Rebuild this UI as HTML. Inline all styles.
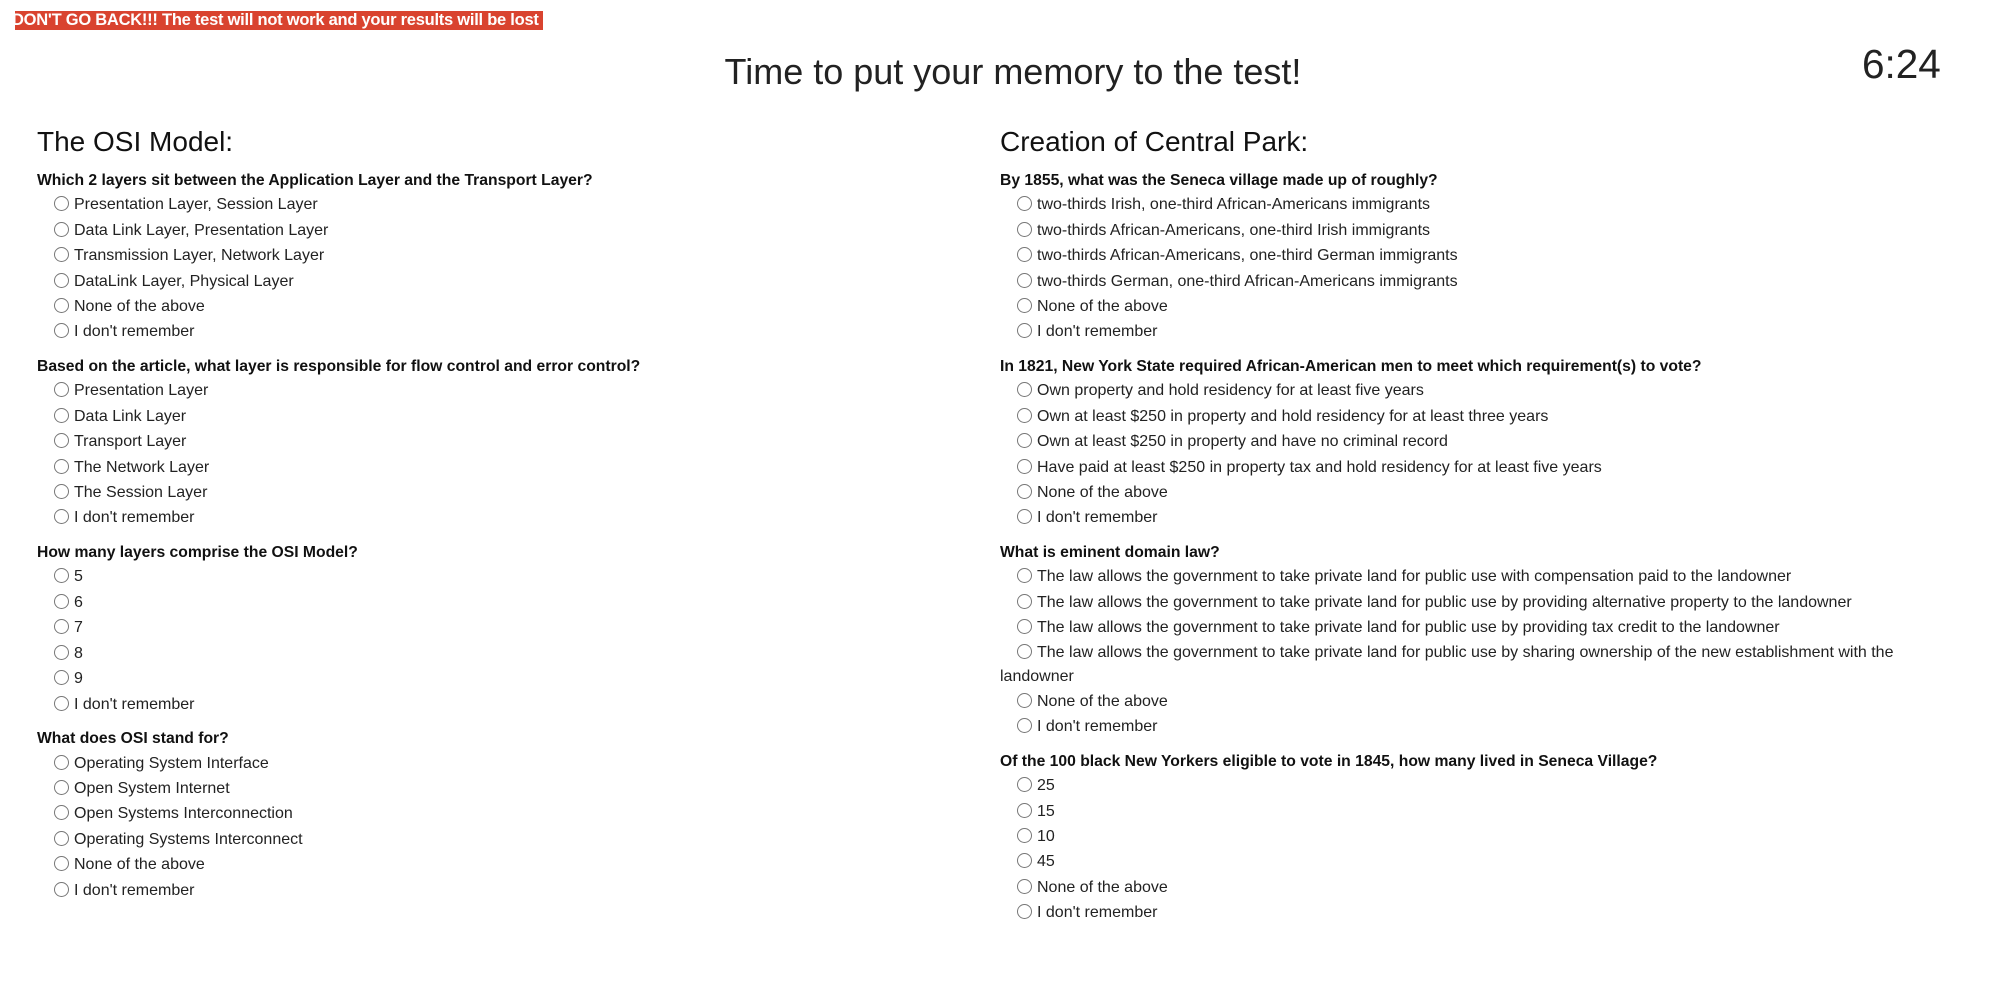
<!DOCTYPE html>
<html><head><meta charset="utf-8"><style>
body{margin:0;width:2002px;height:988px;background:#fff;font-family:"Liberation Sans",Arial,sans-serif;color:#111;position:relative;overflow:hidden}
.banner{position:absolute;left:15px;top:11px;width:528px;height:19px;background:#d9432f;color:#fff;font-weight:bold;font-size:16.5px;line-height:19px;white-space:nowrap;overflow:hidden;letter-spacing:-0.25px;text-indent:-3px}
.title{position:absolute;left:0;width:2026px;top:50px;text-align:center;font-size:36px;line-height:44px;color:#222}
.timer{position:absolute;left:1862px;top:42px;font-size:40.5px;line-height:44px;color:#222}
.col{position:absolute;top:124px}
h2{margin:0;font-weight:normal;font-size:28px;line-height:36px;color:#111}
.q{font-weight:bold;font-size:15.7px;line-height:23.4px;margin-top:10.2px}
.q.first{margin-top:9px}
.o{font-size:16px;line-height:25.4px;padding-left:17px;color:#222}
.o.wrap{line-height:24px}
.r{display:inline-block;width:13px;height:13px;border:1px solid #777;border-radius:50%;vertical-align:-2px;margin-right:5px;background:#fff}
</style></head><body>
<div class="banner">DON'T GO BACK!!! The test will not work and your results will be lost</div>
<div class="title">Time to put your memory to the test!</div>
<div class="timer">6:24</div>

<div class="col" style="left:37px;width:900px">
<h2>The OSI Model:</h2>
<div class="q first">Which 2 layers sit between the Application Layer and the Transport Layer?</div>
<div class="o"><span class="r"></span>Presentation Layer, Session Layer</div>
<div class="o"><span class="r"></span>Data Link Layer, Presentation Layer</div>
<div class="o"><span class="r"></span>Transmission Layer, Network Layer</div>
<div class="o"><span class="r"></span>DataLink Layer, Physical Layer</div>
<div class="o"><span class="r"></span>None of the above</div>
<div class="o"><span class="r"></span>I don't remember</div>
<div class="q">Based on the article, what layer is responsible for flow control and error control?</div>
<div class="o"><span class="r"></span>Presentation Layer</div>
<div class="o"><span class="r"></span>Data Link Layer</div>
<div class="o"><span class="r"></span>Transport Layer</div>
<div class="o"><span class="r"></span>The Network Layer</div>
<div class="o"><span class="r"></span>The Session Layer</div>
<div class="o"><span class="r"></span>I don't remember</div>
<div class="q">How many layers comprise the OSI Model?</div>
<div class="o"><span class="r"></span>5</div>
<div class="o"><span class="r"></span>6</div>
<div class="o"><span class="r"></span>7</div>
<div class="o"><span class="r"></span>8</div>
<div class="o"><span class="r"></span>9</div>
<div class="o"><span class="r"></span>I don't remember</div>
<div class="q">What does OSI stand for?</div>
<div class="o"><span class="r"></span>Operating System Interface</div>
<div class="o"><span class="r"></span>Open System Internet</div>
<div class="o"><span class="r"></span>Open Systems Interconnection</div>
<div class="o"><span class="r"></span>Operating Systems Interconnect</div>
<div class="o"><span class="r"></span>None of the above</div>
<div class="o"><span class="r"></span>I don't remember</div>
</div>

<div class="col" style="left:1000px;width:945px">
<h2>Creation of Central Park:</h2>
<div class="q first">By 1855, what was the Seneca village made up of roughly?</div>
<div class="o"><span class="r"></span>two-thirds Irish, one-third African-Americans immigrants</div>
<div class="o"><span class="r"></span>two-thirds African-Americans, one-third Irish immigrants</div>
<div class="o"><span class="r"></span>two-thirds African-Americans, one-third German immigrants</div>
<div class="o"><span class="r"></span>two-thirds German, one-third African-Americans immigrants</div>
<div class="o"><span class="r"></span>None of the above</div>
<div class="o"><span class="r"></span>I don't remember</div>
<div class="q">In 1821, New York State required African-American men to meet which requirement(s) to vote?</div>
<div class="o"><span class="r"></span>Own property and hold residency for at least five years</div>
<div class="o"><span class="r"></span>Own at least $250 in property and hold residency for at least three years</div>
<div class="o"><span class="r"></span>Own at least $250 in property and have no criminal record</div>
<div class="o"><span class="r"></span>Have paid at least $250 in property tax and hold residency for at least five years</div>
<div class="o"><span class="r"></span>None of the above</div>
<div class="o"><span class="r"></span>I don't remember</div>
<div class="q">What is eminent domain law?</div>
<div class="o"><span class="r"></span>The law allows the government to take private land for public use with compensation paid to the landowner</div>
<div class="o"><span class="r"></span>The law allows the government to take private land for public use by providing alternative property to the landowner</div>
<div class="o"><span class="r"></span>The law allows the government to take private land for public use by providing tax credit to the landowner</div>
<div class="o wrap" style="padding-left:0;text-indent:17px"><span class="r"></span>The law allows the government to take private land for public use by sharing ownership of the new establishment with the landowner</div>
<div class="o"><span class="r"></span>None of the above</div>
<div class="o"><span class="r"></span>I don't remember</div>
<div class="q">Of the 100 black New Yorkers eligible to vote in 1845, how many lived in Seneca Village?</div>
<div class="o"><span class="r"></span>25</div>
<div class="o"><span class="r"></span>15</div>
<div class="o"><span class="r"></span>10</div>
<div class="o"><span class="r"></span>45</div>
<div class="o"><span class="r"></span>None of the above</div>
<div class="o"><span class="r"></span>I don't remember</div>
</div>
</body></html>
